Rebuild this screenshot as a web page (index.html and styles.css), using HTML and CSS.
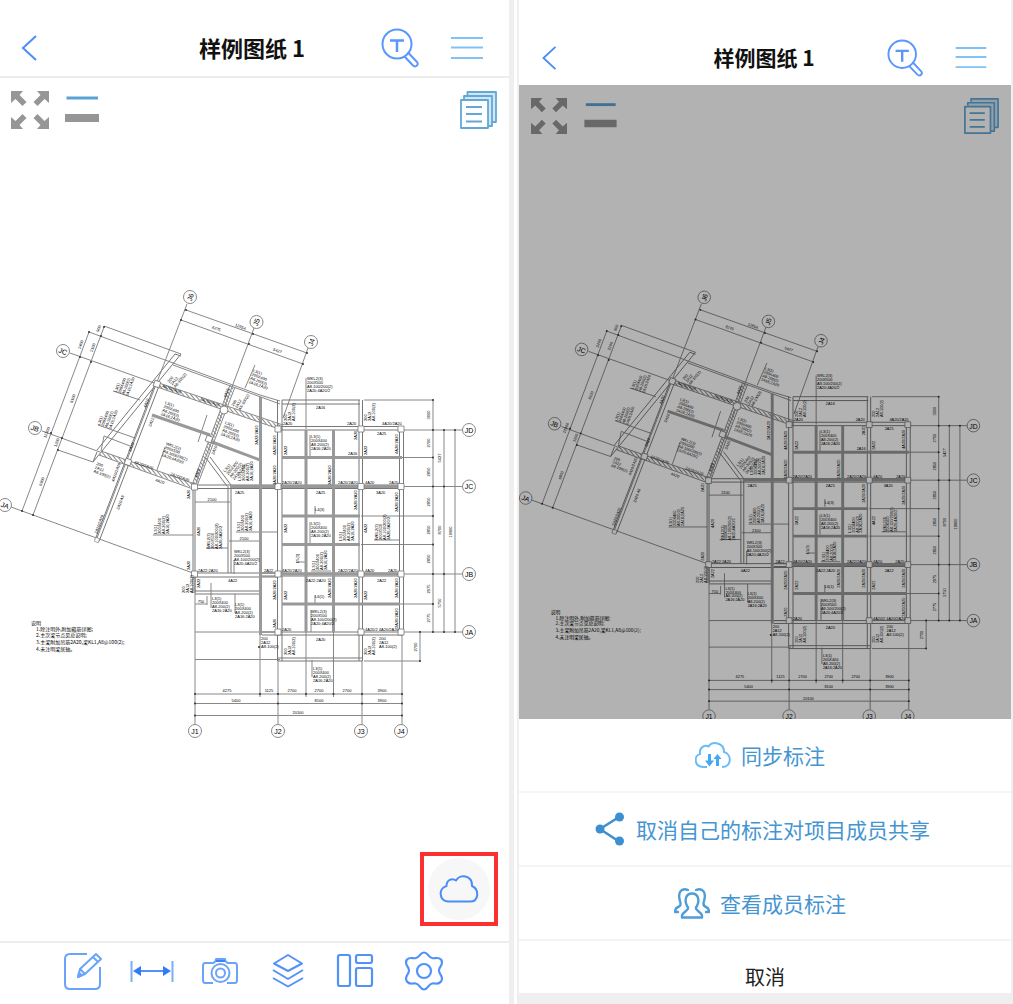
FILE: index.html
```html
<!DOCTYPE html>
<html lang="zh-CN">
<head>
  <meta charset="utf-8" />
  <meta name="viewport" content="width=device-width, initial-scale=1" />
  <title>样例图纸 1</title>
  <link rel="stylesheet" href="styles.css">
</head>
<body>
  <!-- Shared shapes: icons and the floor plan -->
  <svg class="defs" aria-hidden="true">
    <defs>
      <symbol id="icon-back" viewBox="0 0 16 28">
        <path d="M15 2L2 14l13 12" fill="none" stroke="#4a8df8" stroke-width="2"/>
      </symbol>
      <symbol id="icon-search" viewBox="0 0 40 40">
        <g fill="none" stroke="#5a97fa" stroke-width="2" stroke-linecap="round" stroke-linejoin="round">
          <circle cx="16" cy="16" r="14.500"/>
          <path d="M24 29l8 8.500c3 2.500 6-1 4-3.500l-8.500-9"/>
          <path d="M9 12.500h14M16 12.500V24" stroke-width="2.500" stroke-linecap="butt"/>
        </g>
      </symbol>
      <symbol id="icon-menu" viewBox="0 0 32 24">
        <path d="M0 2h32M0 11.500h32M0 22h32" fill="none" stroke="#80c2f5" stroke-width="2"/>
      </symbol>
      <symbol id="icon-expand" viewBox="0 0 38 38">
        <g fill="#969696">
          <path d="M0 0h12L8.500 4l7 7-4 4-7-7L0 12z"/>
          <path d="M38 0H26l3.500 4-7 7 4 4 7-7 4.500 4z"/>
          <path d="M0 38h12l-3.500-4 7-7-4-4-7 7L0 26z"/>
          <path d="M38 38H26l3.500-4-7-7 4-4 7 7 4.500-4z"/>
        </g>
      </symbol>
      <symbol id="icon-width" viewBox="0 0 34 38">
        <path d="M1.500 7h31.500" stroke="#5aa2d6" stroke-width="3"/>
        <path d="M0 27h34" stroke="#969696" stroke-width="8"/>
      </symbol>
      <symbol id="icon-sheets" viewBox="0 0 38 38">
        <g fill="none" stroke="#62a8d6" stroke-width="1.800" stroke-linejoin="round">
          <path d="M8.500 4V1H37v30h-4" fill="#d3e6f3"/>
          <path d="M5 8V5h28v30h-4" fill="#d3e6f3"/>
          <path d="M2 9h27v28H2z" fill="#fff"/>
          <path d="M7 16h16M7 23h16M7 30.500h16"/>
        </g>
      </symbol>
      <symbol id="icon-cloud" viewBox="0 0 40 28">
        <path d="M9 26.500h22c9 0 9.500-12 2-15.500C33.500 0 20.500-1.500 17 5.500 13 2.500 7.500 5 7.500 11-1 13.500 0 25.500 9 26.500z" fill="none" stroke="#4a8df8" stroke-width="2" stroke-linejoin="round"/>
      </symbol>

      <symbol id="icon-edit" viewBox="0 0 44 44">
        <g fill="none" stroke="#6ba3fa" stroke-width="2" stroke-linejoin="round">
          <path d="M25 5H8Q3 5 3 10v25q0 5 5 5h25q5 0 5-5V18"/>
          <path d="M16 28l2-8L34 5l5 5-16 15zM31 8l5 5M18 20l5 5"/>
          <path d="M16 28l1-4 3 2z" fill="#3c82f6"/>
        </g>
      </symbol>
      <symbol id="icon-measure" viewBox="0 0 44 44">
        <path d="M1.500 12v21M42.500 12v21" stroke="#7dadfa" stroke-width="2"/>
        <path d="M8 22h29" stroke="#5292f8" stroke-width="2"/>
        <path d="M3 22l8-5v10zM41 22l-8-5v10z" fill="#2f7bf8"/>
      </symbol>
      <symbol id="icon-camera" viewBox="0 0 44 44">
        <g fill="none" stroke="#6ba3fa" stroke-width="2" stroke-linejoin="round">
          <path d="M15 34H7q-2 0-2-3V17q0-3 2-3h8q3-1 3-4h9q0 3 3 4h7q2 0 2 3v14q0 3-2 3h-8"/>
          <circle cx="22.500" cy="24" r="9"/>
          <circle cx="22.500" cy="24" r="4.500"/>
          <path d="M18 12h9" stroke="#3c82f6"/>
        </g>
      </symbol>
      <symbol id="icon-layers" viewBox="0 0 44 44">
        <g fill="none" stroke="#5292f8" stroke-width="2" stroke-linejoin="round">
          <path d="M22 6l14 8.500L22 22 8 14.500z"/>
          <path d="M7 21l15 9 15-9M7 29l15 8.500L37 29"/>
        </g>
      </symbol>
      <symbol id="icon-layout" viewBox="0 0 44 44">
        <g fill="none" stroke="#5292f8" stroke-width="2.200">
          <rect x="4" y="6" width="12" height="31" rx="2"/>
          <rect x="22" y="6" width="16" height="8" rx="2"/>
          <rect x="22" y="19" width="16" height="18" rx="2"/>
        </g>
      </symbol>
      <symbol id="icon-gear" viewBox="0 0 44 44">
        <g fill="none" stroke="#5292f8" stroke-width="2.200" stroke-linejoin="round">
          <path d="M22 3.500c4 0 4 4.500 8 5.500 3 1 6-1.500 9 1.500 3.500 5-2 6.500-2 11s5.500 6 2 11c-3 4-6 1-9 2-4 1-4 6-8 6s-4-5-8-6c-3-1-6 2-9-2-3.500-5 2-6.500 2-11s-5.500-6-2-11c3-3 6-.5 9-1.500 4-1 4-5.500 8-5.500z"/>
          <circle cx="22" cy="22" r="7"/>
        </g>
      </symbol>

      <symbol id="icon-sync" viewBox="0 0 36 36">
        <path d="M12 30H8C-2 29-.5 18 5 17 4 10 10 7.500 13.500 9.500 17 4 29 5 29 15c8 2 8 15-2 15" fill="none" stroke="#66bdf8" stroke-width="2"/>
        <path d="M14.500 17v10M22.500 29V20" stroke="#45a8f5" stroke-width="3"/>
        <path d="M10 23.500h9l-4.500 6zM18.500 22h8l-4-5z" fill="#45a8f5"/>
      </symbol>
      <symbol id="icon-share" viewBox="0 0 36 36">
        <path d="M29 6L10 18l19 12.500" fill="none" stroke="#3c8fd0" stroke-width="2.500"/>
        <g fill="#3c8fd0">
          <circle cx="10" cy="18" r="4.500"/>
          <circle cx="29.500" cy="6" r="4.500"/>
          <circle cx="29.500" cy="30" r="4.500"/>
        </g>
      </symbol>
      <symbol id="icon-members" viewBox="0 0 36 36">
        <g fill="none" stroke="#4e9dd6" stroke-width="2.400" stroke-linecap="round" stroke-linejoin="round">
          <path d="M18 8.500c-7 0-8 8-4 14 1 3-5 4-6 8v2h20v-2c-1-4-7-5-6-8 4-6 3-14-4-14z"/>
          <path d="M14 5C7 2 3.500 8 6 16c1 3 1 5-2 6-3 1-3 3-3 5h3"/>
          <path d="M22 5c7-3 10.500 3 8 11-1 3-1 5 2 6 3 1 3 3 3 5h-3"/>
        </g>
      </symbol>

      <pattern id="hatch" width="3" height="3" patternUnits="userSpaceOnUse" patternTransform="rotate(-40)">
        <path d="M0 0v3" stroke="#888" stroke-width="2"/>
      </pattern>

      <!-- beam labels -->
      <g id="beam">
        <text y="4">WKL2(3)</text>
        <text y="8">200X500</text>
        <text y="12">A8-100/200(2)</text>
        <text y="16">2A20;4A20/2</text>
      </g>
      <g id="beam-short">
        <text y="4">L3(1)</text>
        <text y="8">200X400</text>
        <text y="12">A8-200(2)</text>
        <text y="16">2A16;2A20</text>
      </g>
      <g id="tag">
        <text y="3">200</text>
        <text y="7">2A12</text>
        <text y="11">A8-100(2)</text>
      </g>
      <g id="col"><path d="M-3-3h6v6h-6z" fill="#fff" stroke="#777" stroke-width=".8"/></g>

      <g id="plan" font-family="Liberation Sans, sans-serif" font-size="4">
        <!-- axis and dimension lines -->
        <g class="axis">
          <path d="M187 304L97 538M254 328L195 486M308 348L283 418"/>
          <path d="M186 310l121 43M181 320l122 44"/>
          <path d="M104 326l77 28M89 332l171 63 20 6M173 365l107 39"/>
          <path d="M104 327L33 515M89 332L22 511"/>
          <path d="M70 353l87 31M42 431l58 21M58 450l35 12M11 507l182 66"/>
          <path d="M364 400h69M403 430h60M361 457.500h72M403 486.500h60M361 516h72M361 544.500h72M403 574h60M361 604h72M403 632h60M364 661h56"/>
          <path d="M433 400v232M444 430v202M455 430v202M420 631v30"/>
          <path d="M195 694h208M195 703.500h208M195 715.500h208"/>
          <path d="M195 573v151M260 632v65M278 660v64M306 632v65M333.500 632v65M362 660v64M402 632v92"/>
          <path d="M195 632h85M195 659.500h85"/>
          <path d="M195 502h35M229 541h31M236 532h42M153 535h40M195 604h12M207 596v9"/>
          <path d="M207 415l-9 27M157 470l8-23M113 391l27 9M98 425l37 13M104 436l26 10M104 436l-3 15M245 388l10-23"/>
          <path d="M306 378v51M310 435v22M310 522v21M311 610v22M312 660v17M235 594v19M211 583v25M374 540h25M206 548h22M234 560v14M315 506v8M315 595v8M296 562h10M311 571h20"/>
        </g>
        <!-- double walls -->
        <g class="wall">
          <path d="M155 384L95 540l4 1.500L159 386"/>
          <path d="M181 354L93 462M175 354L97 450M93 462l4-10M175 354l6 2"/>
          <path d="M206 458l21 28M210 457l21 28"/>
          <path d="M193 486v107M195 486v107M228 486v87M231 486v87"/>
          <path d="M193 573h84M193 577h84M195 591h65M195 594h65"/>
          <path d="M277.500 400v261M282 400v261M359 400v261M362.500 400v261M399.500 427v208M403.500 427v208"/>
          <path d="M282 400h78M282 404h78M276 426.500h127M276 430h127M262 632h141M262 635h141M278 658h84M278 661h84"/>
          <path d="M193 485h210M193 488.500h210M262 573h141M262 576h141"/>
        </g>
        <g class="solid">
          <path d="M152 415l58 20M212 442l48 18M260.500 397v238M306 430v202M333.500 430v202"/>
          <path d="M282 457.500h120M230 486.500h170M282 516h78M282 544.500h78M282 574h118M282 604h118"/>
        </g>
        <g stroke="url(#hatch)" stroke-width="4" fill="none">
          <path d="M100 453l95 33.500M232 386l-38 100M158 385l125 43"/>
        </g>
        <g class="axis">
          <path d="M101 451l94 33M99 455l94 34M230 385l-38 100M235 387l-38 99M159 383l124 42M157 387l125 43"/>
        </g>
        <g>
          <use href="#col" transform="translate(157 384) rotate(20)"/>
          <use href="#col" transform="translate(128 462) rotate(20)"/>
          <use href="#col" transform="translate(209 439) rotate(20)"/>
          <use href="#col" transform="translate(97 540) rotate(20) scale(.7)"/>
          <use href="#col" x="194.500" y="487"/><use href="#col" x="194.500" y="574"/>
          <use href="#col" x="278" y="429"/><use href="#col" x="361" y="429"/><use href="#col" x="401" y="429"/>
          <use href="#col" x="278" y="486.500"/><use href="#col" x="361" y="486.500"/><use href="#col" x="401" y="486.500"/>
          <use href="#col" x="278" y="574"/><use href="#col" x="361" y="574"/><use href="#col" x="401" y="574"/>
          <use href="#col" x="278" y="632"/><use href="#col" x="361" y="632"/><use href="#col" x="401" y="632"/>
          <circle cx="224" cy="410" r="4" fill="#fff" stroke="#888"/>
        </g>
        <!-- dimension ticks -->
        <path class="tick" d="M186 310h0M253 334h0M307 353h0M181 320h0M249 344h0M303 364h0M104 327h0M89 332h0M101 336h0M80 357h0M91 362h0M51 433h0M62 438h0M58 450h0M22 511h0M33 515h0M433 400h0M433 430h0M433 457.500h0M433 486.500h0M433 516h0M433 544.500h0M433 574h0M433 604h0M433 632h0M444 430h0M444 486.500h0M444 574h0M444 632h0M455 430h0M455 632h0M420 632h0M420 661h0M195 694h0M260 694h0M278 694h0M306 694h0M333.500 694h0M362 694h0M402 694h0M195 703.500h0M278 703.500h0M362 703.500h0M402 703.500h0M195 715.500h0M402 715.500h0M259 647h0"/>
        <!-- axis bubbles -->
        <g class="bubble">
          <circle cx="190" cy="297" r="6.500"/><circle cx="256.500" cy="322" r="6.500"/><circle cx="311" cy="342" r="6.500"/>
          <circle cx="63" cy="351" r="6.500"/><circle cx="35" cy="428" r="6.500"/><circle cx="5" cy="505" r="6.500"/>
          <circle cx="469" cy="430" r="6.500"/><circle cx="469" cy="486.500" r="6.500"/><circle cx="469" cy="574" r="6.500"/><circle cx="469" cy="632" r="6.500"/>
          <circle cx="195" cy="731" r="6.500"/><circle cx="278" cy="731" r="6.500"/><circle cx="361" cy="731" r="6.500"/><circle cx="401" cy="731" r="6.500"/>
        </g>
        <g font-size="7" text-anchor="middle">
          <text transform="translate(190 297) rotate(-70)" y="3">J6</text>
          <text transform="translate(256 322) rotate(-70)" y="3">J5</text>
          <text transform="translate(311 342) rotate(-70)" y="3">J4</text>
          <text transform="translate(63 351) rotate(20)" y="3">JC</text>
          <text transform="translate(35 428) rotate(20)" y="3">JB</text>
          <text transform="translate(5 505) rotate(20)" y="3">JA</text>
          <text x="469" y="433">JD</text><text x="469" y="489">JC</text><text x="469" y="577">JB</text><text x="469" y="635">JA</text>
          <text x="195" y="734">J1</text><text x="278" y="734">J2</text><text x="361" y="734">J3</text><text x="401" y="734">J4</text>
        </g>
        <!-- dimensions -->
        <g text-anchor="middle">
          <text x="227" y="692">4275</text><text x="269" y="692">1125</text><text x="292" y="692">2700</text><text x="319" y="692">2700</text><text x="347" y="692">2700</text><text x="382" y="692">3900</text>
          <text x="236" y="702">5400</text><text x="319" y="702">8100</text><text x="382" y="702">3900</text><text x="298" y="714">20100</text>
          <text transform="translate(240 328) rotate(20)">12654</text><text transform="translate(216 330) rotate(20)">6275</text><text transform="translate(277 352) rotate(20)">5427</text>
          <text transform="translate(100 329) rotate(-70)">900</text><text transform="translate(82 345) rotate(-70)">2400</text><text transform="translate(94 348) rotate(-70)">2100</text>
          <text transform="translate(74 399) rotate(-70)">8100</text><text transform="translate(48 433) rotate(-70)">12300</text><text transform="translate(58 443) rotate(-70)">1200</text><text transform="translate(43 482) rotate(-70)">6900</text>
          <text transform="translate(430 415) rotate(-90)">3000</text><text transform="translate(430 443) rotate(-90)">2700</text><text transform="translate(430 472) rotate(-90)">2850</text><text transform="translate(430 502) rotate(-90)">2850</text><text transform="translate(430 530) rotate(-90)">2850</text><text transform="translate(430 559) rotate(-90)">2850</text><text transform="translate(430 589) rotate(-90)">2975</text><text transform="translate(430 618) rotate(-90)">2775</text>
          <text transform="translate(441 458) rotate(-90)">5427</text><text transform="translate(441 530) rotate(-90)">8700</text><text transform="translate(441 603) rotate(-90)">5750</text><text transform="translate(452 532) rotate(-90)">19900</text><text transform="translate(417 647) rotate(-90)">2700</text>
          <text x="212" y="501">2100</text><text x="244" y="540">2100</text><text x="201" y="603">750</text>
        </g>
        <!-- beam notes -->
        <use href="#beam" x="307" y="376"/><use href="#beam-short" x="311" y="434"/>
        <use href="#beam-short" x="311" y="521"/><use href="#beam" x="311" y="609"/><use href="#beam-short" x="313" y="666"/>
        <use href="#beam" x="234" y="549"/><use href="#beam-short" x="212" y="596"/><use href="#beam-short" x="235" y="602"/>
        <use href="#beam-short" transform="translate(254 368) rotate(20)"/>
        <use href="#beam-short" transform="translate(166 400) rotate(20)"/>
        <use href="#beam" transform="translate(167 441) rotate(20)"/>
        <use href="#beam-short" transform="translate(226 420) rotate(20)"/>
        <use href="#beam-short" transform="translate(113 391) rotate(-70)"/>
        <use href="#beam-short" transform="translate(96 424) rotate(-70)"/>
        <use href="#beam-short" transform="translate(222 470) rotate(-50)"/>
        <use href="#beam-short" transform="translate(237 481) rotate(-90)"/>
        <use href="#beam-short" transform="translate(153 534) rotate(-90)"/>
        <use href="#beam" transform="translate(206 549) rotate(-90)"/>
        <use href="#beam-short" transform="translate(236 531) rotate(-90)"/>
        <use href="#beam" transform="translate(374 540) rotate(-90)"/>
        <use href="#beam-short" transform="translate(338 541) rotate(-90)"/>
        <use href="#beam-short" transform="translate(311 570) rotate(-90)"/>
        <use href="#tag" transform="translate(167 381) rotate(-50)"/>
        <use href="#tag" transform="translate(231 405) rotate(-60)"/>
        <use href="#tag" transform="translate(97 462) rotate(20)"/>
        <use href="#tag" transform="translate(284 421) rotate(-90)"/>
        <use href="#tag" transform="translate(364 421) rotate(-90)"/>
        <use href="#tag" transform="translate(284 655) rotate(-90)"/>
        <use href="#tag" transform="translate(364 655) rotate(-90)"/>
        <use href="#tag" transform="translate(182 593) rotate(-90)"/>
        <use href="#tag" x="261" y="637"/><use href="#tag" x="379" y="637"/>
        <g>
          <text x="316" y="409">2A16</text><text x="283" y="425">2A20</text><text x="347" y="425">2A20</text><text x="382" y="425">4A20/2A20</text><text x="377" y="435">2A25</text>
          <text x="282" y="484">2A20/2A20</text><text x="338" y="484">2A20/2A20</text><text x="365" y="484">4A20</text><text x="389" y="484">2A20</text><text x="316" y="494">2A25</text><text x="376" y="494">3A20</text>
          <text x="348" y="455">2A16</text><text x="315" y="511">L4(3)</text><text x="315" y="598">L6(1)</text>
          <text x="282" y="572">4A20/2A20</text><text x="338" y="572">2A22/2A20</text><text x="365" y="572">4A20</text><text x="388" y="572">2A20</text><text x="306" y="582">2A22;2A20</text><text x="377" y="582">2A22</text>
          <text x="282" y="631">2A20</text><text x="365" y="631">4A20/2 4A20/2A20</text><text x="316" y="641">2A20</text><text x="264" y="572">2A22</text>
          <text x="198" y="572">2A22;2A20</text><text x="228" y="582">4A22</text><text x="235" y="494">2A25</text>
          <text transform="translate(162 387) rotate(20)">4A20/2A20</text><text transform="translate(200 400) rotate(20)">2A20/2A20</text><text transform="translate(134 463) rotate(20)">4A20/2A20</text><text transform="translate(170 475) rotate(20)">2A20/2A20</text><text transform="translate(155 481) rotate(20)">4A20</text>
          <text transform="translate(146 408) rotate(-70)">4A20</text><text transform="translate(151 427) rotate(-70)">2A22</text><text transform="translate(131 452) rotate(-70)">2A20</text><text transform="translate(114 482) rotate(-70)">4A20/2A20</text><text transform="translate(97 534) rotate(-70)">2A20/2A20</text><text transform="translate(119 510) rotate(-70)">2A20 A8</text>
          <text transform="translate(226 398) rotate(-70)">4A20</text><text transform="translate(197 478) rotate(-70)">4A20</text><text transform="translate(214 455) rotate(-70)">2A20</text>
          <text transform="translate(258 445) rotate(-90)">2A22/2A20</text><text transform="translate(276 455) rotate(-90)">4A20/2A20</text><text transform="translate(276 485) rotate(-90)">2A20/2A20</text><text transform="translate(276 600) rotate(-90)">2A20/2A20</text><text transform="translate(276 628) rotate(-90)">2A20</text>
          <text transform="translate(331 485) rotate(-90)">2A20/2A20</text><text transform="translate(331 598) rotate(-90)">2A20/2A20</text><text transform="translate(357 510) rotate(-90)">2A20/2A20</text><text transform="translate(357 598) rotate(-90)">2A20/2A20</text><text transform="translate(357 440) rotate(-90)">2A20</text>
          <text transform="translate(398 454) rotate(-90)">4A20/2A20</text><text transform="translate(398 512) rotate(-90)">2A20/2A20</text><text transform="translate(398 598) rotate(-90)">2A20/2A20</text><text transform="translate(398 628) rotate(-90)">2A20/2A20</text>
          <text transform="translate(287 455) rotate(-90)">2A22</text><text transform="translate(287 533) rotate(-90)">2A22</text><text transform="translate(287 600) rotate(-90)">2A22</text><text transform="translate(367 455) rotate(-90)">2A22</text><text transform="translate(367 533) rotate(-90)">4A22</text><text transform="translate(367 600) rotate(-90)">2A22</text>
          <text transform="translate(190 499) rotate(-90)">2A20</text><text transform="translate(200 536) rotate(-90)">4A20</text><text transform="translate(190 570) rotate(-90)">2A20</text><text transform="translate(200 588) rotate(-90)">2A22</text><text transform="translate(299 563) rotate(-90)">L5(3)</text>
        </g>
        <!-- drawing notes -->
        <g class="remark">
          <text x="31" y="625">说明</text>
          <text x="36" y="631">1.除注明外,附加箍筋详图;</text>
          <text x="36" y="637">2.主次梁节点见总说明;</text>
          <text x="36" y="644">3.主梁附加吊筋2A20,梁KL1,A8@100(2);</text>
          <text x="36" y="651">4.未注明梁居轴。</text>
        </g>
      </g>
    </defs>
  </svg>

  <main class="screens">
    <!-- Drawing view -->
    <section class="phone">
      <header class="nav">
        <button class="back" aria-label="返回"><svg width="16" height="28"><use href="#icon-back"/></svg></button>
        <h1>样例图纸 1</h1>
        <div class="nav-actions">
          <button aria-label="搜索文字"><svg width="40" height="40"><use href="#icon-search"/></svg></button>
          <button aria-label="菜单"><svg width="32" height="24"><use href="#icon-menu"/></svg></button>
        </div>
      </header>

      <div class="canvas">
        <svg class="drawing" viewBox="0 78 509 863"><use href="#plan"/></svg>
        <div class="tools">
          <button aria-label="全屏"><svg width="38" height="38"><use href="#icon-expand"/></svg></button>
          <button aria-label="线宽"><svg width="34" height="38"><use href="#icon-width"/></svg></button>
          <button class="sheets" aria-label="图纸列表"><svg width="38" height="38"><use href="#icon-sheets"/></svg></button>
        </div>
        <div class="highlight">
          <button class="cloud" aria-label="云标注"><svg width="40" height="28"><use href="#icon-cloud"/></svg></button>
        </div>
      </div>

      <nav class="toolbar">
        <button aria-label="标注"><svg><use href="#icon-edit"/></svg></button>
        <button aria-label="测量"><svg><use href="#icon-measure"/></svg></button>
        <button aria-label="拍照"><svg><use href="#icon-camera"/></svg></button>
        <button aria-label="图层"><svg><use href="#icon-layers"/></svg></button>
        <button aria-label="布局"><svg><use href="#icon-layout"/></svg></button>
        <button aria-label="设置"><svg><use href="#icon-gear"/></svg></button>
      </nav>
    </section>

    <div class="divider"></div>

    <!-- Same view with the action sheet open -->
    <section class="phone phone-sheet">
      <header class="nav">
        <button class="back" aria-label="返回"><svg width="16" height="26"><use href="#icon-back"/></svg></button>
        <h1>样例图纸 1</h1>
        <div class="nav-actions">
          <button aria-label="搜索文字"><svg width="38" height="38"><use href="#icon-search"/></svg></button>
          <button aria-label="菜单"><svg width="32" height="23"><use href="#icon-menu"/></svg></button>
        </div>
      </header>

      <div class="canvas">
        <svg class="drawing" viewBox="-2 77 510 657" preserveAspectRatio="xMidYMin slice"><use href="#plan"/></svg>
        <div class="tools">
          <button aria-label="全屏"><svg width="38" height="36"><use href="#icon-expand"/></svg></button>
          <button aria-label="线宽"><svg width="33" height="36"><use href="#icon-width"/></svg></button>
          <button class="sheets" aria-label="图纸列表"><svg width="36" height="36"><use href="#icon-sheets"/></svg></button>
        </div>
        <div class="mask"></div>
      </div>

      <div class="sheet">
        <button><svg width="36" height="36"><use href="#icon-sync"/></svg>同步标注</button>
        <button><svg width="36" height="36"><use href="#icon-share"/></svg>取消自己的标注对项目成员共享</button>
        <button><svg width="36" height="36"><use href="#icon-members"/></svg>查看成员标注</button>
        <button class="cancel">取消</button>
      </div>
    </section>
  </main>
</body>
</html>
```
FILE: styles.css
```css
* {
  box-sizing: border-box;
}

body {
  margin: 0;
  background-color: #efefef;
  font-family: "Noto Sans CJK SC", sans-serif;
  color: #111;
}

button {
  padding: 0;
  border: none;
  background: none;
  font: inherit;
  color: inherit;
  cursor: pointer;
}

svg {
  display: block;
}

.defs {
  position: absolute;
  width: 0;
  height: 0;
}

.screens {
  display: grid;
  grid-template-columns: 509fr auto 492fr;
  height: 100vh;
  padding-right: 2px;
}

.divider {
  width: 3px;
  margin: 0 2px 0 5px;
  background-color: #fff;
}

.phone {
  display: flex;
  flex-direction: column;
  min-width: 0;
  min-height: 0;
  background-color: #fff;
}

/* Title bar */
.nav {
  display: grid;
  grid-template-columns: 1fr auto 1fr;
  align-items: center;
  flex-shrink: 0;
  height: 78px;
  padding: 20px 26px 0 21px;
  border-bottom: 2px solid #ededed;
  background-color: #fff;
}

.nav h1 {
  margin: 0;
  padding-bottom: 2px;
  font-size: 22px;
  font-weight: bold;
  line-height: 32px;
}

.back {
  justify-self: start;
}

.nav-actions {
  display: flex;
  justify-content: flex-end;
  align-items: center;
  gap: 30px;
}

/* Drawing area */
.canvas {
  position: relative;
  flex: 1;
  min-height: 0;
  overflow: hidden;
  background-color: #fff;
}

.drawing {
  width: 100%;
  height: 100%;
}

.tools {
  position: absolute;
  top: 13px;
  left: 11px;
  right: 12px;
  display: flex;
  gap: 16px;
}

.sheets {
  margin-left: auto;
}

.highlight {
  position: absolute;
  right: 11px;
  bottom: 15px;
  padding: 2px 4px;
  border: 4px solid #fb3030;
}

.cloud {
  display: flex;
  justify-content: center;
  align-items: center;
  width: 62px;
  height: 62px;
  border-radius: 50%;
  background-color: #f7f7f7;
}

/* Floor plan strokes */
.axis {
  fill: none;
  stroke: #888;
  stroke-width: 1;
}

.wall {
  fill: none;
  stroke: #777;
  stroke-width: 1;
}

.solid {
  fill: none;
  stroke: #999;
  stroke-width: 3;
}

.tick {
  stroke: #333;
  stroke-width: 2;
  stroke-linecap: round;
}

.bubble {
  fill: #fff;
  stroke: #888;
}

.remark {
  font-family: "Noto Sans CJK SC", sans-serif;
  font-size: 5px;
}

/* Bottom toolbar */
.toolbar {
  display: flex;
  justify-content: center;
  align-items: flex-start;
  gap: 24px;
  flex-shrink: 0;
  height: 63px;
  padding-top: 6px;
  padding-right: 2px;
  border-top: 2px solid #ededed;
}

.toolbar svg {
  width: 44px;
  height: 44px;
}

/* Second screen */
.phone-sheet {
  background-color: #efefef;
}

.phone-sheet .nav {
  height: 85px;
  padding: 30px 24px 0 22px;
  border-bottom: none;
}

.phone-sheet .nav h1 {
  font-size: 21px;
}

.mask {
  position: absolute;
  inset: 0;
  background-color: rgba(0, 0, 0, 0.3);
}

.sheet {
  display: flex;
  flex-direction: column;
  flex-shrink: 0;
  margin-bottom: 11px;
  background-color: #fff;
}

.sheet button {
  display: flex;
  justify-content: center;
  align-items: center;
  gap: 10px;
  height: 74px;
  padding-right: 10px;
  border-bottom: 2px solid #f4f4f4;
  font-size: 21px;
  line-height: 28px;
  color: #4595d1;
}

.sheet .cancel {
  height: 52px;
  padding: 20px 0 0;
  border-bottom: none;
  font-size: 20px;
  color: #222;
}
```
